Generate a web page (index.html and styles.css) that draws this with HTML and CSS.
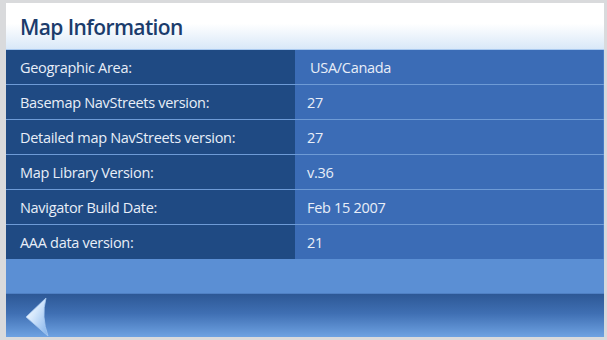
FILE: index.html
```html
<!DOCTYPE html>
<html lang="en">
<head>
<meta charset="UTF-8" />
<meta name="viewport" content="width=device-width, initial-scale=1" />
<title>Map Information</title>
<link rel="stylesheet" href="styles.css">
</head>
<body>

<div class="screen">
  <header class="title-bar">
    <h1>Map Information</h1>
  </header>

  <div class="info">
    <div class="row">
      <div class="label">Geographic Area:</div>
      <div class="value first">USA/Canada</div>
    </div>
    <div class="row">
      <div class="label">Basemap NavStreets version:</div>
      <div class="value">27</div>
    </div>
    <div class="row">
      <div class="label">Detailed map NavStreets version:</div>
      <div class="value">27</div>
    </div>
    <div class="row">
      <div class="label">Map Library Version:</div>
      <div class="value">v.36</div>
    </div>
    <div class="row">
      <div class="label">Navigator Build Date:</div>
      <div class="value">Feb 15 2007</div>
    </div>
    <div class="row">
      <div class="label">AAA data version:</div>
      <div class="value">21</div>
    </div>
  </div>

  <div class="spacer"></div>

  <footer class="nav-bar">
    <button class="back" aria-label="Back">
      <svg width="26" height="40" viewBox="0 0 26 40">
        <defs>
          <linearGradient id="arrowFill" x1="0" y1="0" x2="1" y2="1">
            <stop offset="0" stop-color="#ffffff" />
            <stop offset="0.4" stop-color="#d6e8fc" />
            <stop offset="1" stop-color="#7fb0ea" />
          </linearGradient>
        </defs>
        <path d="M22 1 L2 20 L24 39 Q17 20 22 1 Z" fill="url(#arrowFill)" stroke="#a8c9f0" stroke-width="0.8" stroke-linejoin="round" />
      </svg>
    </button>
  </footer>
</div>

</body>
</html>
```

FILE: styles.css
```css
body {
  margin: 0;
  background: #d9dadc;
  font-family: "Open Sans", "DejaVu Sans", sans-serif;
}
.screen {
  width: 598px;
  height: 334px;
  margin: 3px 0 0 6px;
  display: flex;
  flex-direction: column;
  background: #3b6cb6;
}
.title-bar {
  height: 47px;
  flex: none;
  background: linear-gradient(to bottom, #ffffff 0%, #ffffff 45%, #d9e8f8 100%);
  border-bottom: 1px solid #a9c9ef;
  box-sizing: border-box;
  display: flex;
  align-items: center;
}
h1 {
  margin: 0;
  padding: 2px 0 0 14px;
  font-size: 21px;
  font-weight: 600;
  color: #1b3c6c;
  letter-spacing: -0.6px;
}
.info {
  display: flex;
  flex-direction: column;
}
.row {
  display: flex;
  height: 35px;
  box-sizing: border-box;
  border-bottom: 1px solid #6e9bd6;
}
.row:last-child {
  border-bottom: none;
  height: 34px;
}
.label, .value {
  display: flex;
  align-items: center;
  color: #e8eef8;
  font-size: 14.5px;
  letter-spacing: -0.3px;
}
.label {
  width: 289px;
  padding-left: 14px;
  box-sizing: border-box;
  background: #1f4a83;
}
.value {
  flex: 1;
  padding-left: 12px;
  background: #3b6cb6;
  border-right: 1px solid #4a7dc6;
}
.value.first {
  padding-left: 15px;
}
.spacer {
  height: 34px;
  flex: none;
  background: #5b8fd4;
  border-bottom: 1px solid #4f80c4;
}
.nav-bar {
  flex: 1;
  background: linear-gradient(to bottom, #2d5896 0%, #3f6fb3 45%, #6ea2e2 100%);
  display: flex;
  align-items: flex-end;
}
.back {
  margin: 0 0 0 18px;
  padding: 0;
  border: none;
  background: none;
  display: flex;
}
```
